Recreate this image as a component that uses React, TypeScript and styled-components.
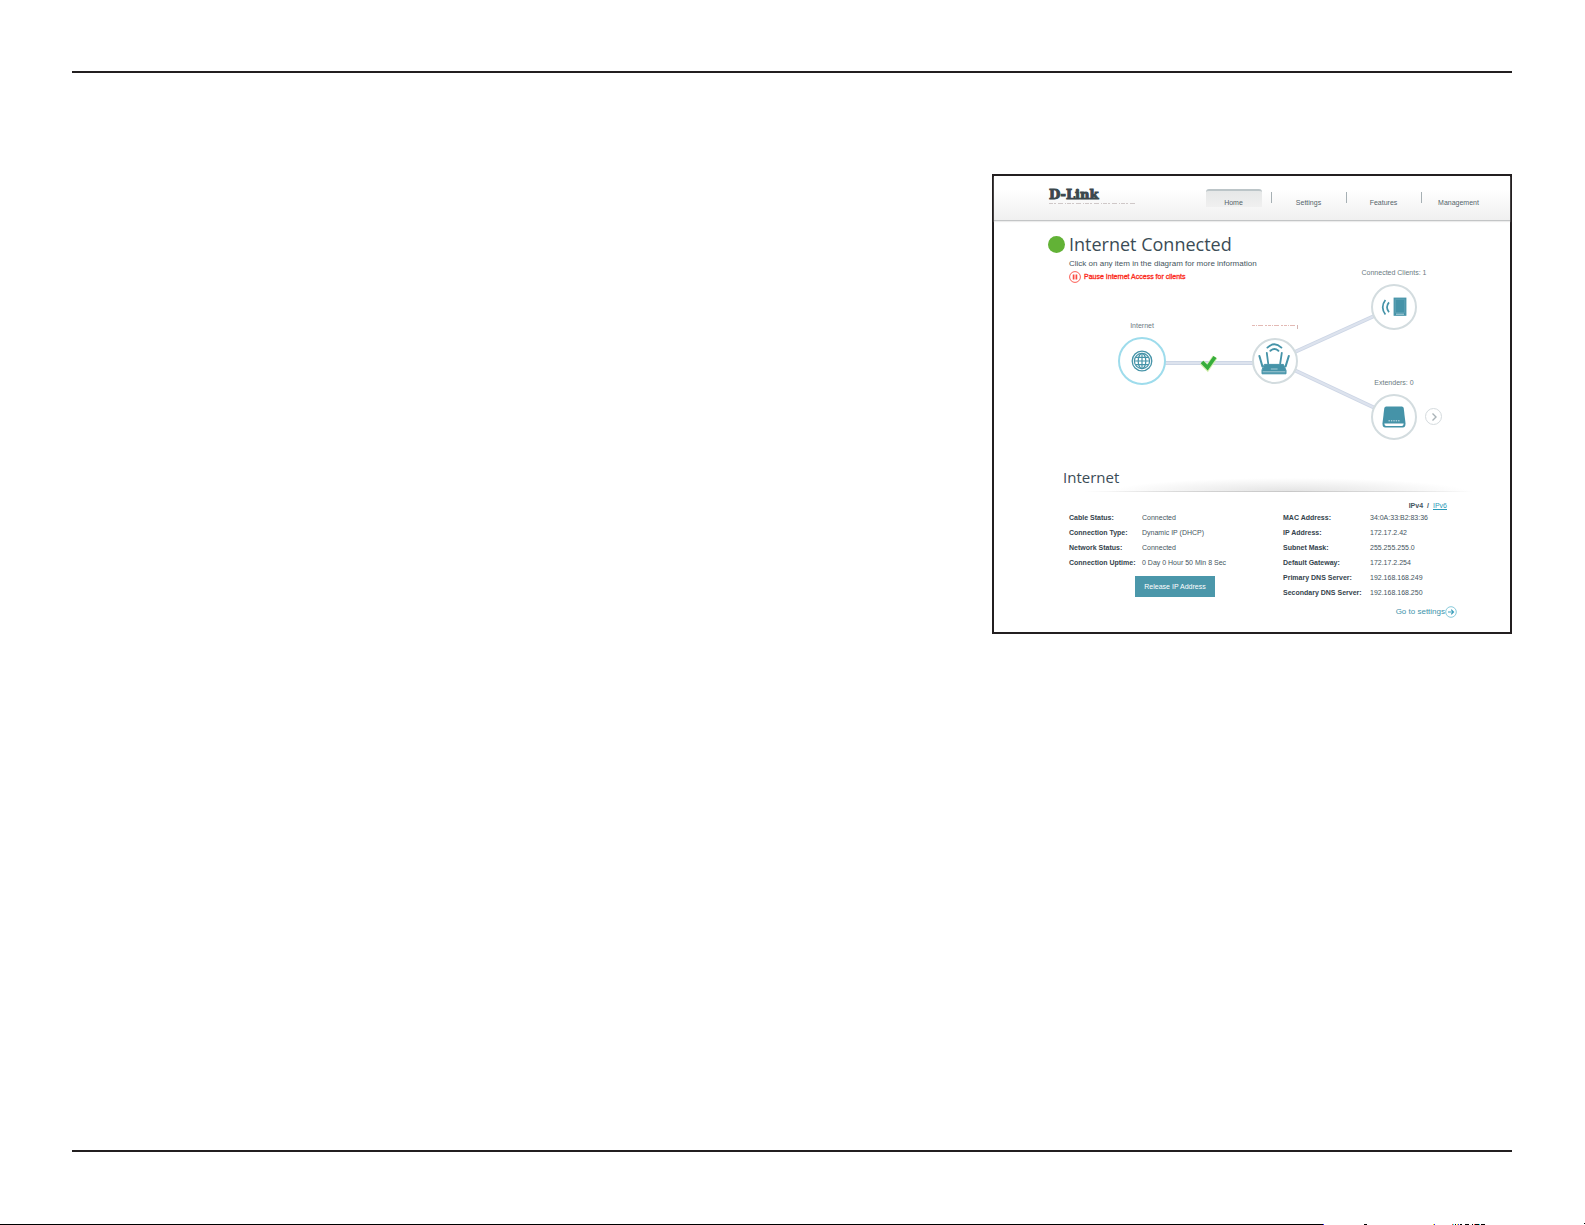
import React from "react";
import styled, { createGlobalStyle } from "styled-components";

const ink = "#231f20";
const teal = "#4593a8";
const slate = "#45555e";

const GlobalStyle = createGlobalStyle`
  *, *::before, *::after { box-sizing: border-box; }
  body { margin: 0; background: #fff; }
`;

const Page = styled.div`
  display: flex;
  flex-direction: column;
  min-height: 100vh;
  font-family: "Liberation Sans", Arial, sans-serif;
  color: ${slate};
`;

const Sheet = styled.main`
  flex: 1;
  display: flex;
  flex-direction: column;
  margin: 71px 73px 71px 72px;
  padding: 101px 0;
  border-top: 2px solid ${ink};
  border-bottom: 2px solid ${ink};
`;

const Frame = styled.section`
  align-self: flex-end;
  width: 100%;
  max-width: 520px;
  border: 2px solid ${ink};
  background: #fff;
  padding-bottom: 14px;
`;

const Header = styled.header`
  display: flex;
  justify-content: space-between;
  height: 45px;
  padding: 13px 14px 0 55px;
  background: linear-gradient(#fff 30%, #f0f0f0);
  border-bottom: 1px solid #c3c5c6;
  box-shadow: 0 1px 1px #ececec;
`;

const Brand = styled.a`
  display: flex;
  flex-direction: column;
  color: #3b474c;
  text-decoration: none;
  font: bold 13px/12px "DejaVu Serif", serif;
  -webkit-text-stroke: 1px #3b474c;
`;

const Nav = styled.nav`
  display: flex;
`;

const NavItem = styled.div`
  display: flex;
  justify-content: center;
  width: 75px;
  height: 18px;
  background: linear-gradient(#a6b0b4, #a6b0b4) 0 3px / 1px 11px no-repeat;

  &:first-child {
    background: none;
  }
`;

const NavLink = styled.a<{ $active?: boolean }>`
  width: 56px;
  padding-top: ${(p) => (p.$active ? "6px" : "8px")};
  border-top: ${(p) => (p.$active ? "2px solid #bcc5c8" : "0")};
  border-radius: 3px 3px 0 0;
  background: ${(p) => (p.$active ? "linear-gradient(#e6e8e8, #f0f0f0)" : "none")};
  font-size: 7px;
  line-height: 11px;
  text-align: center;
  text-decoration: none;
  color: #55646b;
`;

const Overview = styled.div`
  display: grid;
`;

const Intro = styled.div`
  grid-area: 1 / 1;
  padding: 14px 0 0 54px;
`;

const TitleRow = styled.div`
  display: flex;
  align-items: center;
  gap: 4px;
`;

const Dot = styled.span`
  width: 17px;
  height: 17px;
  border-radius: 50%;
  background: #62b236;
`;

const Title = styled.h1`
  margin: 0;
  font: 400 18px/18px "Open Sans", "Noto Sans", sans-serif;
  color: #3b4c56;
`;

const Hint = styled.p`
  margin: 5px 0 0 21px;
  font-size: 8px;
  line-height: 12px;
`;

const PauseButton = styled.button`
  position: relative;
  z-index: 1;
  display: flex;
  align-items: center;
  gap: 3px;
  margin: 0 0 0 21px;
  padding: 0;
  border: 0;
  background: none;
  font: 7px/12px "Liberation Sans", Arial, sans-serif;
  -webkit-text-stroke: 0.3px currentColor;
  color: #fb2a20;
`;

const Diagram = styled.div`
  grid-area: 1 / 1;
  position: relative;
  width: 516px;
  height: 235px;
`;

const Links = styled.svg`
  display: block;
`;

const Node = styled.div<{ $x: number; $y: number; $r: number }>`
  position: absolute;
  left: ${(p) => p.$x - 40}px;
  top: ${(p) => p.$y - p.$r - 17}px;
  width: 80px;
  display: flex;
  flex-direction: column;
  align-items: center;
  gap: 5px;
`;

const NodeLabel = styled.span`
  display: flex;
  align-items: center;
  height: 12px;
  font-size: 7px;
  line-height: 12px;
  color: #6b7a82;
`;

const Disc = styled.button<{ $size: number; $selected?: boolean }>`
  display: flex;
  align-items: center;
  justify-content: center;
  width: ${(p) => p.$size}px;
  height: ${(p) => p.$size}px;
  padding: 0;
  border: 2px solid ${(p) => (p.$selected ? "#9edcec" : "#d3dcdf")};
  border-radius: 50%;
  background: #fff;
`;

const NextButton = styled.button`
  position: absolute;
  left: 431px;
  top: 187px;
  display: flex;
  align-items: center;
  justify-content: center;
  width: 17px;
  height: 17px;
  padding: 0;
  border: 1px solid #d5dbde;
  border-radius: 50%;
  background: #fff;
`;

const Details = styled.div`
  padding: 12px 36px 0 69px;
`;

const SectionTitle = styled.h2`
  height: 24px;
  margin: 0;
  font: 400 15px/18px "Open Sans", "Noto Sans", sans-serif;
  color: #3b4c56;
  background:
    linear-gradient(90deg, transparent 5%, #d2d2d2 35%, #c8c8c8 55%, #dcdcdc 80%, transparent) bottom / 100% 1px no-repeat,
    radial-gradient(ellipse 180px 14px at 55% 100%, #e2e2e2, transparent) no-repeat;
`;

const Body = styled.div`
  padding: 9px 0 0 6px;
`;

const Version = styled.div`
  display: flex;
  justify-content: flex-end;
  gap: 4px;
  padding-right: 27px;
  font-size: 7px;
  line-height: 9px;
  font-weight: bold;

  a {
    font-weight: normal;
    color: #2c9ab8;
  }
`;

const Columns = styled.div`
  display: grid;
  grid-template-columns: 212px 1fr;
  column-gap: 2px;
`;

const Facts = styled.table<{ $label: number }>`
  border-collapse: collapse;
  font-size: 7px;
  line-height: 15px;
  white-space: nowrap;

  th,
  td {
    padding: 0;
    height: 15px;
    text-align: left;
  }
  th {
    width: ${(p) => p.$label}px;
    color: #34434c;
  }
`;

const Release = styled.button`
  display: block;
  width: 80px;
  height: 21px;
  margin: 6px auto 0;
  padding: 0;
  border: 0;
  background: #4b97aa;
  color: #fff;
  font: 7px/21px "Liberation Sans", Arial, sans-serif;
`;

const SettingsLink = styled.a`
  display: flex;
  align-items: center;
  justify-content: flex-end;
  margin-top: 6px;
  padding-right: 17px;
  font-size: 8px;
  line-height: 12px;
  color: #3d93ab;
  text-decoration: none;
`;

const tabs = ["Home", "Settings", "Features", "Management"];

const connection = [
  ["Cable Status:", "Connected"],
  ["Connection Type:", "Dynamic IP (DHCP)"],
  ["Network Status:", "Connected"],
  ["Connection Uptime:", "0 Day 0 Hour 50 Min 8 Sec"],
];

const addresses = [
  ["MAC Address:", "34:0A:33:B2:83:36"],
  ["IP Address:", "172.17.2.42"],
  ["Subnet Mask:", "255.255.255.0"],
  ["Default Gateway:", "172.17.2.254"],
  ["Primary DNS Server:", "192.168.168.249"],
  ["Secondary DNS Server:", "192.168.168.250"],
];

function FactTable({ rows, label }: { rows: string[][]; label: number }) {
  return (
    <Facts $label={label}>
      <tbody>
        {rows.map(([name, value]) => (
          <tr key={name}>
            <th scope="row">{name}</th>
            <td>{value}</td>
          </tr>
        ))}
      </tbody>
    </Facts>
  );
}

const PauseIcon = () => (
  <svg width="12" height="14" viewBox="0 0 12 14" fill="none" stroke="#fb4a40">
    <circle cx="6" cy="7" r="5.4" strokeWidth="0.9" />
    <path d="M4.6 4.6v4.8M7.4 4.6v4.8" strokeWidth="1.7" />
  </svg>
);

const GlobeIcon = () => (
  <svg width="22" height="22" viewBox="0 0 22 22" fill="none" stroke={teal} strokeWidth="1.2">
    <circle cx="11" cy="11" r="9.8" strokeWidth="1.3" />
    <circle cx="11" cy="11" r="7.6" />
    <ellipse cx="11" cy="11" rx="3.8" ry="7.6" />
    <path d="M11 3.4v15.2M3.4 11h15.2M4.4 7.4h13.2M4.4 14.6h13.2" />
  </svg>
);

const RouterIcon = () => (
  <svg width="34" height="36" viewBox="-2 0 34 36" fill="none" stroke={teal} strokeLinecap="round">
    <path d="M7.400 4.600Q14.400-2 21.400 4.600M10.400 7.800q4-3.400 8 0" strokeWidth="1.9" />
    <path d="M6.800 9.800L8.200 20.500M21.800 9.800L20.200 20.500" strokeWidth="1.8" />
    <path d="M-0.600 13L2.400 23.400M28.800 13L25.600 23.400" strokeWidth="2" />
    <path d="M4.600 21.400h18.800l2.600 6v3.400H2v-3.400z" fill={teal} strokeWidth="1" strokeLinejoin="round" />
    <path d="M3 28.800h22" stroke="#cfe4ea" strokeWidth="0.7" />
    <path d="M11.200 26h6" stroke="#cfe4ea" strokeWidth="0.7" />
  </svg>
);

const ClientIcon = () => (
  <svg width="26" height="20" viewBox="0 0 26 20" fill="none" stroke={teal}>
    <path d="M4.4 3Q-1 10 4.4 17.6M8 5.4Q4 10.2 8 15.2" strokeWidth="1.7" />
    <rect x="13.2" y="1.2" width="11.6" height="17" fill={teal} strokeWidth="1.2" />
    <path d="M14.4 2.4h9.2v13.2h-9.2z" stroke="#6fadbd" strokeWidth="0.5" />
    <path d="M15 17.2h8" stroke="#cfe4ea" strokeWidth="0.8" />
  </svg>
);

const ExtenderIcon = () => (
  <svg width="24" height="24" viewBox="0 0 24 24">
    <path d="M4.2 1.4h15.6q1.6 0 1.9 1.6l1.8 15.2q.2 4.4-2.8 4.4H3.3Q.3 22.6 .5 18.2L2.3 3q.3-1.6 1.9-1.6z" fill={teal} />
    <path d="M2.3 18.6h19.4q-.2 2.3-1.6 2.3H3.9q-1.4 0-1.6-2.3z" fill="#fff" />
    <path d="M6.5 15.8h11" stroke="#d5e8ed" strokeWidth="1" strokeDasharray="1.4 1" />
  </svg>
);

const ArrowIcon = () => (
  <svg width="12" height="12" viewBox="0 0 12 12" fill="none" stroke="#3d9fbb">
    <circle cx="6" cy="6" r="5.3" stroke="#7cc4d6" strokeWidth="0.9" />
    <path d="M3 6h5.5M6.2 3.7L8.5 6 6.2 8.3" strokeWidth="1.2" />
  </svg>
);

export default function App() {
  return (
    <Page>
      <GlobalStyle />
      <Sheet>
        <Frame>
          <Header>
            <Brand href="#">
              D-Link
              <svg width="88" height="3" viewBox="0 0 88 3">
                <path d="M0 2.5h88" stroke="#cfc8c8" strokeWidth="1" strokeDasharray="4 1 2 2 5 2 1 1" />
              </svg>
            </Brand>
            <Nav>
              {tabs.map((tab, i) => (
                <NavItem key={tab}>
                  <NavLink href="#" $active={i === 0}>
                    {tab}
                  </NavLink>
                </NavItem>
              ))}
            </Nav>
          </Header>

          <Overview>
            <Intro>
              <TitleRow>
                <Dot />
                <Title>Internet Connected</Title>
              </TitleRow>
              <Hint>Click on any item in the diagram for more information</Hint>
              <PauseButton type="button">
                <PauseIcon />
                Pause Internet Access for clients
              </PauseButton>
            </Intro>

            <Diagram>
              <Links width="516" height="235" viewBox="0 0 516 235" fill="none">
                <g stroke="#cdd6e5" strokeWidth="4">
                  <path d="M148 142H281" />
                  <path d="M281 140L400 86" />
                  <path d="M281 140L400 196" />
                </g>
                <g stroke="#dde3ee" strokeWidth="2">
                  <path d="M148 142H281" />
                  <path d="M281 140L400 86" />
                  <path d="M281 140L400 196" />
                </g>
                <path d="M208 141.5l5.5 5.5L221 136" stroke="#d5efb0" strokeWidth="5.5" />
                <path d="M208 141l5.5 5.5L221 136" stroke="#36ad3c" strokeWidth="3.8" />
              </Links>

              <Node $x={148} $y={140} $r={24}>
                <NodeLabel>Internet</NodeLabel>
                <Disc type="button" $size={48} $selected aria-label="Internet">
                  <GlobeIcon />
                </Disc>
              </Node>
              <Node $x={281} $y={140} $r={23}>
                <NodeLabel>
                  <svg width="46" height="6" viewBox="0 0 46 6">
                    <path d="M0 1.5h46" stroke="#e3b9b4" strokeWidth="1" strokeDasharray="3 1 1 1 5 2 2 1" />
                    <path d="M45.5 1v4" stroke="#d5b5b2" strokeWidth="1" />
                  </svg>
                </NodeLabel>
                <Disc type="button" $size={46} aria-label="Router">
                  <RouterIcon />
                </Disc>
              </Node>
              <Node $x={400} $y={86} $r={23}>
                <NodeLabel>Connected Clients: 1</NodeLabel>
                <Disc type="button" $size={46} aria-label="Connected clients">
                  <ClientIcon />
                </Disc>
              </Node>
              <Node $x={400} $y={196} $r={23}>
                <NodeLabel>Extenders: 0</NodeLabel>
                <Disc type="button" $size={46} aria-label="Extenders">
                  <ExtenderIcon />
                </Disc>
              </Node>
              <NextButton type="button" aria-label="Next">
                <svg width="8" height="10" viewBox="0 0 8 10" fill="none">
                  <path d="M2.5 1.5L6 5 2.5 8.5" stroke="#a9b2b7" strokeWidth="1.4" />
                </svg>
              </NextButton>
            </Diagram>
          </Overview>

          <Details>
            <SectionTitle>Internet</SectionTitle>
            <Body>
              <Version>
                <span>IPv4</span>
                <span>/</span>
                <a href="#">IPv6</a>
              </Version>
              <Columns>
                <div>
                  <FactTable rows={connection} label={73} />
                  <Release type="button">Release IP Address</Release>
                </div>
                <FactTable rows={addresses} label={87} />
              </Columns>
              <SettingsLink href="#">
                Go to settings
                <ArrowIcon />
              </SettingsLink>
            </Body>
          </Details>
        </Frame>
      </Sheet>
      <PageEdge />
    </Page>
  );
}

const Edge = styled.footer`
  display: flex;
  height: 2px;
  overflow: hidden;
`;

const EdgeLine = styled.div`
  flex: 1;
  border-bottom: 1px solid #000;
`;

/* Printed strip along the foot of the sheet, trailing off into marks. */
function PageEdge() {
  return (
    <Edge>
      <EdgeLine />
      <svg width="262" height="2" viewBox="0 0 262 2" shapeRendering="crispEdges">
        <path d="M41 1h3v1h-3zM132 1h1v1h-1zM137 1h2v1h-2zM142 1h4v1h-4zM149 1h1v1h-1zM152 1h4v1h-4zM158 1h4v1h-4zM261 0h1v1h-1z" fill="#000" />
        <path d="M0 1h1v1H0zM111 1h1v1h-1zM135 1h1v1h-1z" fill="#22f" />
        <path d="M110 1h1v1h-1zM134 1h1v1h-1z" fill="#fe0" />
        <path d="M129 1h1v1h-1zM151 1h1v1h-1z" fill="#f43" />
        <path d="M130 1h1v1h-1zM156 1h1v1h-1z" fill="#0ee" />
      </svg>
    </Edge>
  );
}
